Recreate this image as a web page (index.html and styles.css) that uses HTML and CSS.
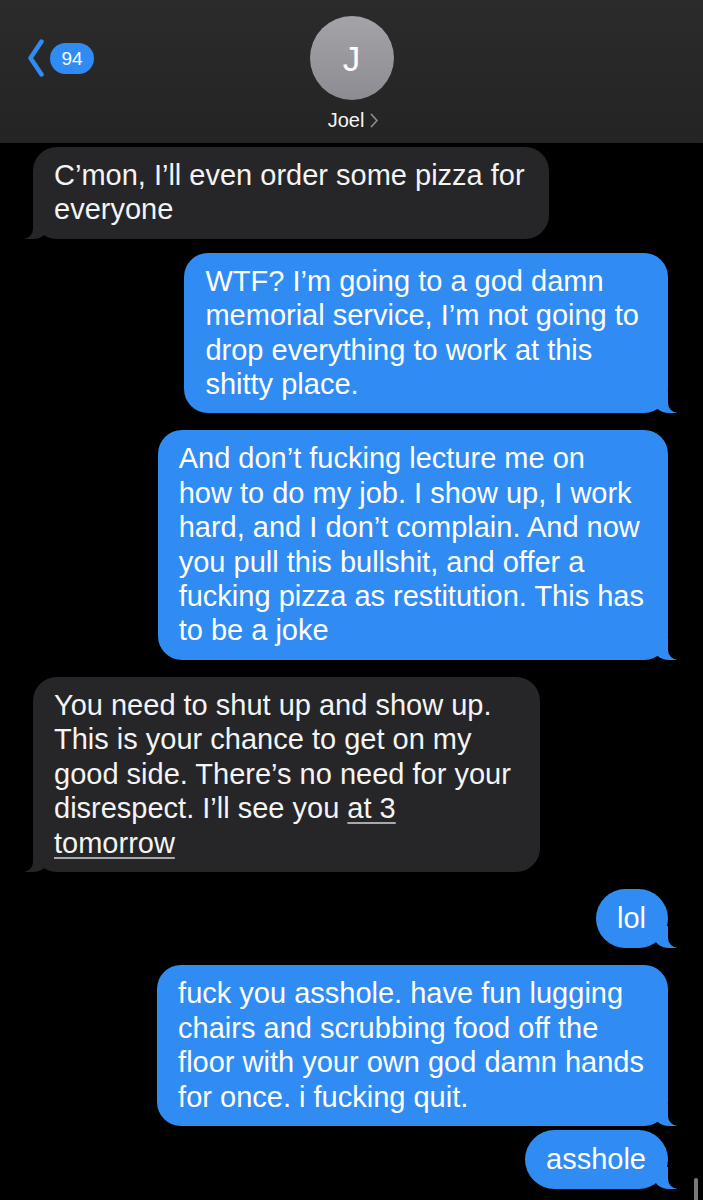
FILE: index.html
```html
<!DOCTYPE html>
<html lang="en">
<head>
<meta charset="utf-8">
<title>Joel</title>
<link rel="stylesheet" href="styles.css">
</head>
<body>
<header class="topbar">
  <div class="back">
    <svg class="back-chevron" width="18" height="38" viewBox="0 0 18 38"><polyline points="14.5,2.5 3.5,19 14.5,35.5" fill="none" stroke="#2f8cf3" stroke-width="4.5" stroke-linecap="round" stroke-linejoin="round"/></svg>
    <span class="badge">94</span>
  </div>
  <div class="contact">
    <div class="avatar">J</div>
    <div class="name">Joel <svg class="name-chevron" width="9" height="15" viewBox="0 0 9 15"><polyline points="1.5,1.5 7,7.5 1.5,13.5" fill="none" stroke="#8d8d92" stroke-width="1.7" stroke-linecap="round" stroke-linejoin="round"/></svg></div>
  </div>
  <div class="spacer"></div>
</header>

<main class="thread">
  <div class="msg in first"><div class="bubble">C’mon, I’ll even order some pizza for<br>everyone</div></div>
  <div class="msg out gap-s"><div class="bubble wide-r">WTF? I’m going to a god damn<br>memorial service, I’m not going to<br>drop everything to work at this<br>shitty place.</div></div>
  <div class="msg out"><div class="bubble">And don’t fucking lecture me on<br>how to do my job. I show up, I work<br>hard, and I don’t complain. And now<br>you pull this bullshit, and offer a<br>fucking pizza as restitution. This has<br>to be a joke</div></div>
  <div class="msg in"><div class="bubble wide-r">You need to shut up and show up.<br>This is your chance to get on my<br>good side. There’s no need for your<br>disrespect. I’ll see you <span class="link">at 3</span><br><span class="link">tomorrow</span></div></div>
  <div class="msg out short"><div class="bubble">lol</div></div>
  <div class="msg out"><div class="bubble">fuck you asshole. have fun lugging<br>chairs and scrubbing food off the<br>floor with your own god damn hands<br>for once. i fucking quit.</div></div>
  <div class="msg out gap-xs short"><div class="bubble">asshole</div></div>
</main>
<div class="scrollbar"></div>
</body>
</html>
```
FILE: styles.css
```css
:root {
  --blue: #308cf3;
  --gray: #262628;
}
* { box-sizing: border-box; }
html, body {
  margin: 0;
  padding: 0;
  background: #000;
}
body {
  font-family: "Liberation Sans", Arial, sans-serif;
  color: #fff;
  width: 703px;
  height: 1200px;
  overflow: hidden;
  position: relative;
}

/* header */
.topbar {
  height: 143px;
  background: linear-gradient(#2b2b2b, #242424);
  display: grid;
  grid-template-columns: 1fr auto 1fr;
  padding-top: 16px;
}
.back {
  display: flex;
  align-items: center;
  align-self: start;
  margin-top: 23px;
  padding-left: 27px;
  gap: 5px;
}
.back-chevron { display: block; }
.badge {
  background: var(--blue);
  color: #fff;
  height: 31px;
  min-width: 44px;
  padding: 0 8px;
  border-radius: 16px;
  font-size: 19px;
  line-height: 31px;
  text-align: center;
}
.contact {
  display: flex;
  flex-direction: column;
  align-items: center;
}
.avatar {
  width: 84px;
  height: 84px;
  border-radius: 50%;
  background: linear-gradient(#a3a3a8, #8c8c92);
  color: #fff;
  font-size: 35px;
  font-weight: 400;
  display: flex;
  align-items: center;
  justify-content: center;
  padding-top: 2px;
}
.name {
  margin-top: 8px;
  font-size: 20px;
  line-height: 24px;
  color: #f5f5f5;
  display: flex;
  align-items: center;
  gap: 6px;
  padding-left: 4px;
}
.name-chevron { display: block; margin-top: 1px; }

/* thread */
.thread {
  display: flex;
  flex-direction: column;
  padding: 0 35px 0 33px;
}
.msg {
  display: flex;
  margin-top: 17px;
}
.msg.first { margin-top: 4px; }
.msg.gap-s { margin-top: 14px; }
.msg.gap-xs { margin-top: 4px; }
.msg.out { justify-content: flex-end; }
.msg.in { justify-content: flex-start; }

.bubble {
  position: relative;
  isolation: isolate;
  font-size: 29px;
  line-height: 34.4px;
  padding: 11px 24px 12px 21px;
  border-radius: 24px;
  white-space: nowrap;
}
.bubble.wide-r { padding-right: 29px; }
.msg.short .bubble { padding: 12px 22px 13px 21px; border-radius: 30px; }
.out .bubble { background: var(--blue); color: #fff; }
.in .bubble { background: var(--gray); color: #f4f4f4; }

.bubble::before,
.bubble::after {
  content: "";
  position: absolute;
  bottom: 0;
  z-index: -1;
  height: 22px;
}
.out .bubble::before {
  right: -9px;
  width: 24px;
  background: var(--blue);
  border-bottom-left-radius: 16px 14px;
}
.out .bubble::after {
  right: -26px;
  width: 26px;
  background: #000;
  border-bottom-left-radius: 10px;
}
.in .bubble::before {
  left: -8px;
  width: 24px;
  background: var(--gray);
  border-bottom-right-radius: 16px 14px;
}
.in .bubble::after {
  left: -26px;
  width: 26px;
  background: #000;
  border-bottom-right-radius: 10px;
}

.link {
  text-decoration: underline;
  text-decoration-color: #a8a8ad;
  text-decoration-thickness: 2px;
  text-underline-offset: 4px;
}

.scrollbar {
  position: absolute;
  right: 5px;
  top: 1178px;
  width: 4px;
  height: 30px;
  border-radius: 2px;
  background: #7a7a7e;
}
```
